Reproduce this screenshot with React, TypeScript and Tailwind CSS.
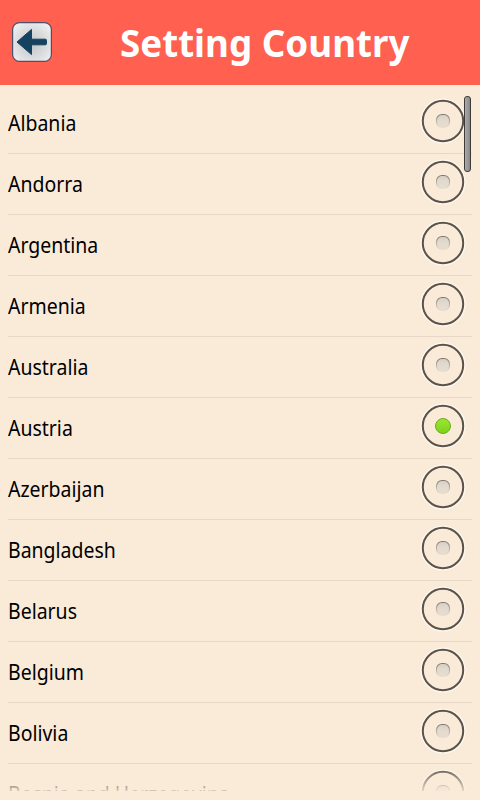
import { useState } from 'react'

const countries = [
  'Albania',
  'Andorra',
  'Argentina',
  'Armenia',
  'Australia',
  'Austria',
  'Azerbaijan',
  'Bangladesh',
  'Belarus',
  'Belgium',
  'Bolivia',
  'Bosnia and Herzegovina',
]

function BackButton() {
  return (
    <button aria-label="Back" className="ml-3 size-10 shrink-0">
      <svg viewBox="0 0 40 40" className="size-10">
        <defs>
          <radialGradient id="backFace" cx="50%" cy="55%" r="68%">
            <stop offset="0" stopColor="#c3c4c6" />
            <stop offset="0.5" stopColor="#d9dadc" />
            <stop offset="1" stopColor="#f1f2f3" />
          </radialGradient>
        </defs>
        <rect x="0.6" y="0.6" width="38.8" height="38.8" rx="7" fill="url(#backFace)" stroke="#4d5068" strokeWidth="1.2" />
        <path
          d="M5 20 L19.5 7.4 V17.2 H33.3 Q34.5 17.2 34.5 18.4 V21.6 Q34.5 22.8 33.3 22.8 H19.5 V32.6 Z"
          fill="#14425f"
          stroke="#14425f"
          strokeWidth="1"
          strokeLinejoin="round"
        />
      </svg>
    </button>
  )
}

function RadioMark({ checked }: { checked: boolean }) {
  return (
    <svg viewBox="0 0 48 48" className="size-12 shrink-0">
      <defs>
        <linearGradient id="hole" x1="0" y1="0" x2="0" y2="1">
          <stop offset="0" stopColor="#d6cdc3" />
          <stop offset="0.4" stopColor="#e2d9ce" />
          <stop offset="1" stopColor="#e8ddd0" />
        </linearGradient>
        <linearGradient id="holeEdge" x1="0" y1="0" x2="0" y2="1">
          <stop offset="0" stopColor="#807970" />
          <stop offset="0.6" stopColor="#c4baae" />
          <stop offset="1" stopColor="#eadecf" />
        </linearGradient>
        <linearGradient id="lamp" x1="0" y1="0" x2="0" y2="1">
          <stop offset="0" stopColor="#9be832" />
          <stop offset="1" stopColor="#7ed01a" />
        </linearGradient>
      </defs>
      <circle cx="24" cy="24" r="21.8" fill="none" stroke="#fff8ee" strokeWidth="1.6" />
      <circle cx="24" cy="24" r="20.2" fill="#faebd9" stroke="#5b534b" strokeWidth="2" />
      {checked ? (
        <circle cx="24" cy="24" r="7.5" fill="url(#lamp)" stroke="#6cab1f" strokeWidth="1" />
      ) : (
        <rect x="17.5" y="17.5" width="13" height="13" rx="5.6" fill="url(#hole)" stroke="url(#holeEdge)" strokeWidth="1.1" />
      )}
    </svg>
  )
}

export default function App() {
  const [selected, setSelected] = useState('Austria')

  return (
    <div className="flex h-[800px] w-[480px] flex-col overflow-hidden bg-[#faebd9] font-['Noto_Sans','Open_Sans',sans-serif]">
      <header className="flex h-[85px] shrink-0 items-center bg-[#ff6050] pb-px">
        <BackButton />
        <h1 className="ml-[68px] origin-left scale-x-[0.967] text-[38px] leading-[52px] font-bold whitespace-nowrap text-white">
          Setting Country
        </h1>
      </header>

      <main className="relative mx-2 mt-2 h-[698px] overflow-hidden">
        <ul>
          {countries.map((country) => (
            <li key={country} className="h-[61px] border-b border-[#e6d7c7]">
              <button
                onClick={() => setSelected(country)}
                className="flex h-[60px] w-full items-start justify-between pt-1 pr-[5px] text-left"
              >
                <span className="mt-[10px] origin-left scale-x-[0.885] text-[22px] leading-[30px] whitespace-nowrap text-black">
                  {country}
                </span>
                <RadioMark checked={country === selected} />
              </button>
            </li>
          ))}
        </ul>

        {/* Fade at the end of the list */}
        <div className="pointer-events-none absolute inset-x-0 bottom-0 h-[25px] bg-linear-to-b from-[#faebd9]/0 to-[#faebd9]/85"></div>

        {/* Scrollbar thumb */}
        <div className="absolute top-[3px] right-px h-[76px] w-[7px] rounded-[3px] border border-[#3d3b3a] bg-linear-to-r from-[#aeabaa] to-[#8a8786]"></div>
      </main>
    </div>
  )
}
